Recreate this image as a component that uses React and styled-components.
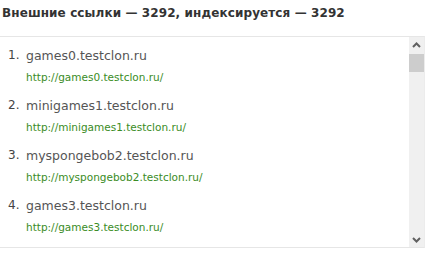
import React from 'react'
import styled, { createGlobalStyle } from 'styled-components';

const Global = createGlobalStyle`
    body {
        margin: 0;
        background: #fff;
        font-family: Tahoma, "DejaVu Sans", sans-serif;
    }
`;

const Page = styled.section`
    width: 425px;
`;

const Title = styled.h2`
    margin: 0;
    padding: 6px 0 0 2px;
    height: 30px;
    box-sizing: border-box;
    font-size: 12px;
    font-weight: bold;
    color: #333;
    letter-spacing: 0.1px;
`;

const Box = styled.div`
    display: flex;
    height: 210px;
    border-top: 1px solid #e6e6e6;
    border-bottom: 1px solid #e6e6e6;
    border-right: 1px solid #ececec;
    margin-top: 6px;
`;

const List = styled.ol`
    flex: 1;
    margin: 0;
    padding: 10px 0 0 8px;
    list-style: none;
    overflow: hidden;
`;

const Item = styled.li`
    display: grid;
    grid-template-columns: 18px 1fr;
    row-gap: 7px;
    margin-bottom: 13px;
`;

const Num = styled.span`
    font-size: 12px;
    color: #444;
    line-height: 17px;
`;

const Domain = styled.span`
    font-size: 12.5px;
    color: #555;
    line-height: 17px;
`;

const Url = styled.a`
    grid-column: 2;
    font-size: 10.5px;
    color: #3a8c25;
    text-decoration: none;
    line-height: 13px;
`;

const Scroll = styled.div`
    width: 15px;
    display: flex;
    flex-direction: column;
    background: #f0f0f0;
`;

const Arrow = styled.div`
    height: 15px;
    display: flex;
    align-items: center;
    justify-content: center;
    background: #f0f0f0;
`;

const Track = styled.div`
    flex: 1;
    padding-top: 2px;
`;

const Thumb = styled.div`
    height: 18px;
    background: #cdcdcd;
`;

const links = ['games0', 'minigames1', 'myspongebob2', 'games3'];

function Chevron({ up }) {
    return (
        <svg width="9" height="6" viewBox="0 0 9 6">
            <path d={up ? 'M1 5 L4.5 1.5 L8 5' : 'M1 1 L4.5 4.5 L8 1'} fill="none" stroke="#606060" strokeWidth="2" />
        </svg>
    );
}

export default function App() {
    return (
        <Page>
            <Global />
            <Title>Внешние ссылки — 3292, индексируется — 3292</Title>
            <Box>
                <List>
                    {links.map((l, i) => (
                        <Item key={l}>
                            <Num>{i + 1}.</Num>
                            <Domain>{l}.testclon.ru</Domain>
                            <Url href="#">http://{l}.testclon.ru/</Url>
                        </Item>
                    ))}
                </List>
                <Scroll>
                    <Arrow><Chevron up /></Arrow>
                    <Track><Thumb /></Track>
                    <Arrow><Chevron /></Arrow>
                </Scroll>
            </Box>
        </Page>
    );
}
